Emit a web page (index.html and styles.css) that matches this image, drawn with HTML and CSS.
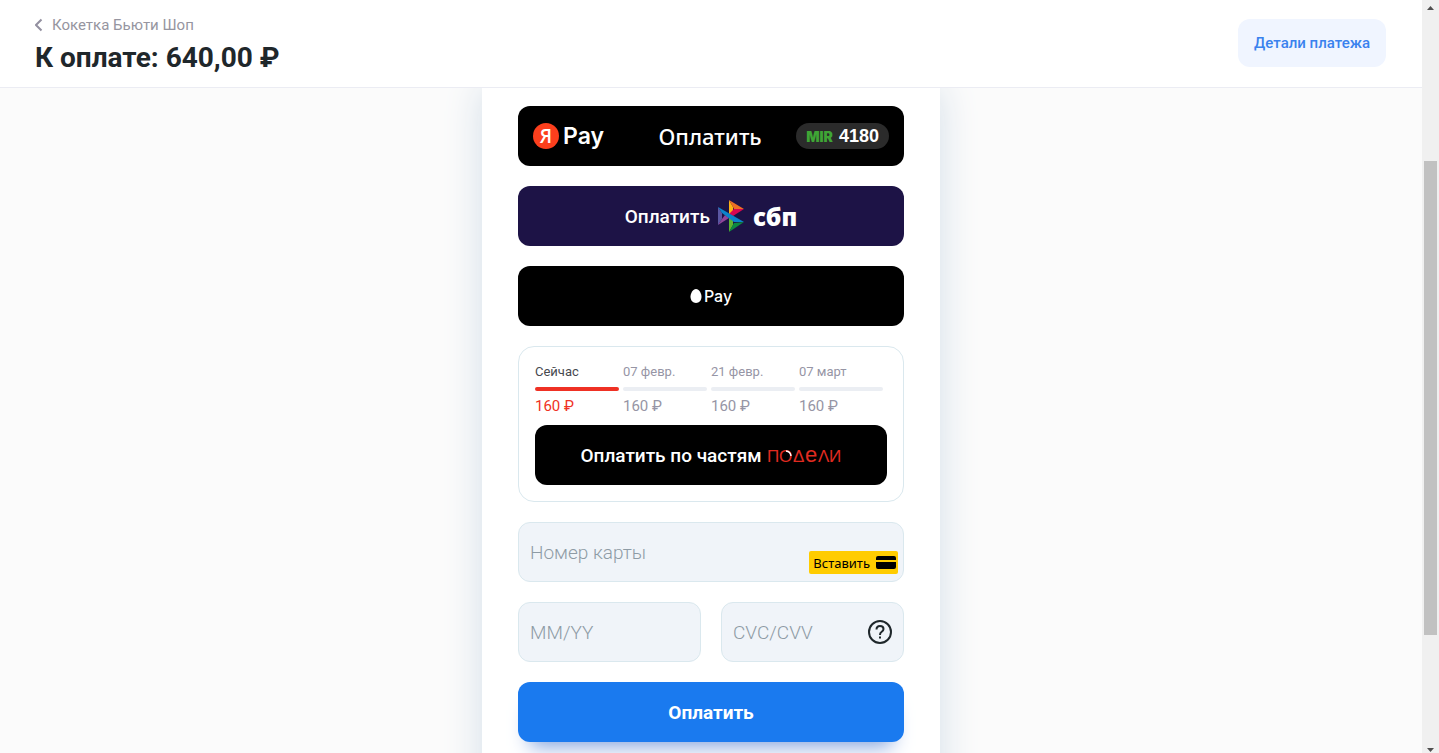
FILE: index.html
```
<!DOCTYPE html>
<html lang="ru">
<head>
  <meta charset="UTF-8">
  <meta name="viewport" content="width=device-width, initial-scale=1.0">
  <title>К оплате: 640,00 ₽</title>
  <link rel="stylesheet" href="styles.css">
</head>
<body>
  <div class="page">
    <header class="header">
      <div>
        <a href="#" class="back">
          <svg width="9" height="14" viewBox="0 0 9 14"><path d="M6.500 1.500 1 7l5.500 5.500" fill="none" stroke="#9390a0" stroke-width="2"/></svg>
          Кокетка Бьюти Шоп
        </a>
        <h1>К оплате: 640,00 ₽</h1>
      </div>
      <button type="button" class="details">Детали платежа</button>
    </header>

    <main class="main">
      <form class="card">
        <button type="button" class="pay yandex">
          <span class="ya-logo">
            <span class="ya-circle">Я</span>
            <span>Pay</span>
          </span>
          <span class="ya-label">Оплатить</span>
          <span class="ya-card"><b class="mir">MIR</b>4180</span>
        </button>

        <button type="button" class="pay sbp">
          Оплатить
          <svg class="sbp-logo" width="27" height="32" viewBox="0 0 27 32">
            <path d="M0 7v18l4-6v-6z" fill="#5b57a2"/>
            <path d="M11 0v15l4-3V7z" fill="#fbb314"/>
            <path d="M11 0l15 9H16l-1-2z" fill="#ee6f24"/>
            <path d="M26 9 15 16l-4-2 5-5z" fill="#d90751"/>
            <path d="M11 16v16l4-7v-6z" fill="#5fb331"/>
            <path d="M26 22 11 32l5-9z" fill="#0d8a40"/>
            <path d="M0 25 11 18l-4-3-3 4z" fill="#90459a"/>
            <path d="M0 7l26 15H16L4 13z" fill="#0c84ca"/>
          </svg>
          <b class="sbp-name">сбп</b>
        </button>

        <button type="button" class="pay sber">
          <svg width="12" height="14" viewBox="0 0 12 14"><path d="M6 0c3 0 5.500 4 5.500 7.800S9 14 6 14 .5 11.600.5 7.800 3 0 6 0z" fill="#fff"/></svg>
          Pay
        </button>

        <section class="split">
          <ul class="parts">
            <li class="part active"><span>Сейчас</span><i></i><b>160 ₽</b></li>
            <li class="part"><span>07 февр.</span><i></i><b>160 ₽</b></li>
            <li class="part"><span>21 февр.</span><i></i><b>160 ₽</b></li>
            <li class="part"><span>07 март</span><i></i><b>160 ₽</b></li>
          </ul>
          <button type="button" class="pay podeli">
            Оплатить по частям
            <svg class="podeli-logo" width="74" height="32" viewBox="0 0 74 32">
              <text y="23" x="-1 11 25 37 50 61"><tspan>ПОΔ</tspan><tspan class="big">e</tspan><tspan>ΛИ</tspan></text>
              <path d="M18 12q4.500.5 5 5" fill="none" stroke="#fff" stroke-width="1.500"/>
            </svg>
          </button>
        </section>

        <div class="field">
          <input type="text" aria-label="Номер карты" placeholder="Номер карты">
          <button type="button" class="insert">
            Вставить
            <svg width="20" height="14" viewBox="0 0 20 14"><path d="M2 0h16q2 0 2 2v2H0V2q0-2 2-2zM0 6h20v5q0 2-2 2H2q-2 0-2-2z"/></svg>
          </button>
        </div>

        <div class="row">
          <div class="field">
            <input type="text" aria-label="MM/YY" placeholder="MM/YY">
          </div>
          <div class="field">
            <input type="text" aria-label="CVC/CVV" placeholder="CVC/CVV">
            <button type="button" class="help" aria-label="Что такое CVC/CVV">
              <svg width="24" height="24" viewBox="0 0 24 24" fill="none" stroke="#1f272b" stroke-width="2">
                <circle cx="12" cy="12" r="11"/>
                <path d="M8.500 9.500q0-3.500 3.500-3.500t3.500 3q0 1.500-1.800 2.800T12 15M12 16.500v2"/>
              </svg>
            </button>
          </div>
        </div>

        <button type="submit" class="pay submit">Оплатить</button>
      </form>
    </main>
  </div>

  <div class="scrollbar">
    <svg width="7" height="4" viewBox="0 0 7 4"><path d="M0 4 3.500 0 7 4z" fill="#505050"/></svg>
    <div class="track"><div class="thumb"></div></div>
    <svg width="7" height="4" viewBox="0 0 7 4"><path d="M0 0h7L3.500 4z" fill="#505050"/></svg>
  </div>
</body>
</html>
```
FILE: styles.css
```
* {
  margin: 0;
  padding: 0;
  box-sizing: border-box;
}

body {
  display: flex;
  height: 100vh;
  overflow: hidden;
  background: #fbfbfb;
  color: #1f272b;
  font-family: Roboto, sans-serif;
}

button {
  border: none;
  font-family: inherit;
  cursor: pointer;
}

.page {
  flex: 1;
  display: flex;
  flex-direction: column;
  min-width: 0;
}

/* header */
.header {
  flex: none;
  display: flex;
  justify-content: space-between;
  align-items: flex-start;
  height: 88px;
  padding: 15px 36px 0 35px;
  background: #fff;
  border-bottom: 1px solid #ebecf3;
}

.back {
  display: flex;
  align-items: center;
  gap: 8px;
  color: #9695a0;
  font-size: 15px;
  line-height: 20px;
  text-decoration: none;
}

h1 {
  margin-top: 4px;
  font-size: 28px;
  font-weight: 700;
  line-height: 38px;
}

.details {
  height: 48px;
  margin-top: 4px;
  padding: 0 16px;
  border-radius: 12px;
  background: #f0f5ff;
  color: #3a82ee;
  font-size: 15px;
  font-weight: 500;
}

/* payment card */
.main {
  flex: 1;
  display: flex;
  justify-content: center;
  min-height: 0;
  overflow: hidden;
}

.card {
  flex: none;
  display: flex;
  flex-direction: column;
  gap: 20px;
  width: 458px;
  height: max-content;
  padding: 18px 36px 60px;
  background: #fff;
  box-shadow: 0 0 36px #d3dee8;
}

.pay {
  display: flex;
  align-items: center;
  justify-content: center;
  flex: none;
  width: 100%;
  height: 60px;
  border-radius: 12px;
  background: #000;
  color: #fff;
  font-size: 19px;
  font-weight: 500;
}

.yandex {
  justify-content: space-between;
  padding: 0 15px;
  font-family: "Noto Sans", sans-serif;
  font-size: 22px;
}

.ya-logo {
  display: flex;
  align-items: center;
  gap: 4px;
  font-family: Inter, sans-serif;
  font-size: 23px;
  font-weight: 600;
}

.ya-circle {
  width: 26px;
  height: 26px;
  border-radius: 50%;
  background: #fc3f1d;
  font-family: "Open Sans", sans-serif;
  font-size: 19px;
  line-height: 26px;
  text-align: center;
}

.ya-label {
  margin-left: 20px;
}

.ya-card {
  display: flex;
  align-items: center;
  gap: 6px;
  height: 26px;
  padding: 0 10px;
  border-radius: 13px;
  background: #2b2b2b;
  font-family: "Liberation Sans", sans-serif;
  font-size: 18px;
  font-weight: 700;
}

.mir {
  color: #3fa535;
  font-family: Inter, sans-serif;
  font-size: 14px;
  font-weight: 900;
}

.sbp {
  background: #1d1346;
}

.sbp-logo {
  margin: 0 8px;
}

.sbp-name {
  font-family: "Open Sans", sans-serif;
  font-size: 24px;
  font-weight: 800;
}

.sber {
  gap: 2px;
  font-family: Inter, sans-serif;
  font-size: 16px;
}

/* instalments */
.split {
  padding: 16px;
  border: 1px solid #dae8ee;
  border-radius: 16px;
}

.parts {
  display: grid;
  grid-template-columns: repeat(4, 1fr);
  margin-bottom: 10px;
  list-style: none;
}

.part {
  display: flex;
  flex-direction: column;
  padding-right: 4px;
  color: #9695a5;
  font-size: 13px;
  line-height: 18px;
}

.part i {
  height: 4px;
  margin: 6px 0;
  border-radius: 2px;
  background: #ebeef3;
}

.part b {
  font-size: 15px;
  font-weight: 400;
}

.active span {
  color: #46494f;
}

.active i {
  background: #ef3124;
}

.active b {
  color: #ef3124;
}

.podeli {
  gap: 6px;
}

.podeli-logo {
  fill: #e02b20;
  font-family: "Liberation Sans", sans-serif;
  font-size: 17px;
  font-weight: 400;
}

.podeli-logo .big {
  font-size: 22px;
}

/* card fields */
.row {
  display: grid;
  grid-template-columns: 1fr 1fr;
  gap: 20px;
}

.field {
  position: relative;
}

.field input {
  display: block;
  width: 100%;
  height: 60px;
  padding: 0 11px;
  border: 1px solid #dae8ee;
  border-radius: 12px;
  background: #f0f4f9;
  color: #1f272b;
  font-family: inherit;
  font-size: 19px;
  font-weight: 300;
}

.field input::placeholder {
  color: #8e9ba5;
  opacity: 1;
}

.insert {
  position: absolute;
  right: 6px;
  bottom: 8px;
  display: flex;
  align-items: center;
  gap: 6px;
  height: 23px;
  padding: 0 2px 0 4px;
  border-radius: 2px;
  background: #fc0;
  color: #000;
  font-family: "Noto Sans", sans-serif;
  font-size: 13px;
}

.help {
  position: absolute;
  top: 18px;
  right: 12px;
  height: 24px;
  background: none;
}

.submit {
  background: #1a7aef;
  font-weight: 700;
  box-shadow: 0 16px 20px -12px #7d9fdc;
}

/* scrollbar */
.scrollbar {
  flex: none;
  display: flex;
  flex-direction: column;
  align-items: center;
  width: 17px;
  padding: 6px 0 1px;
  background: #f0f0f0;
}

.track {
  flex: 1;
  width: 13px;
}

.thumb {
  height: calc(100% - 264px);
  margin-top: 151px;
  background: #c1c1c1;
}
```
